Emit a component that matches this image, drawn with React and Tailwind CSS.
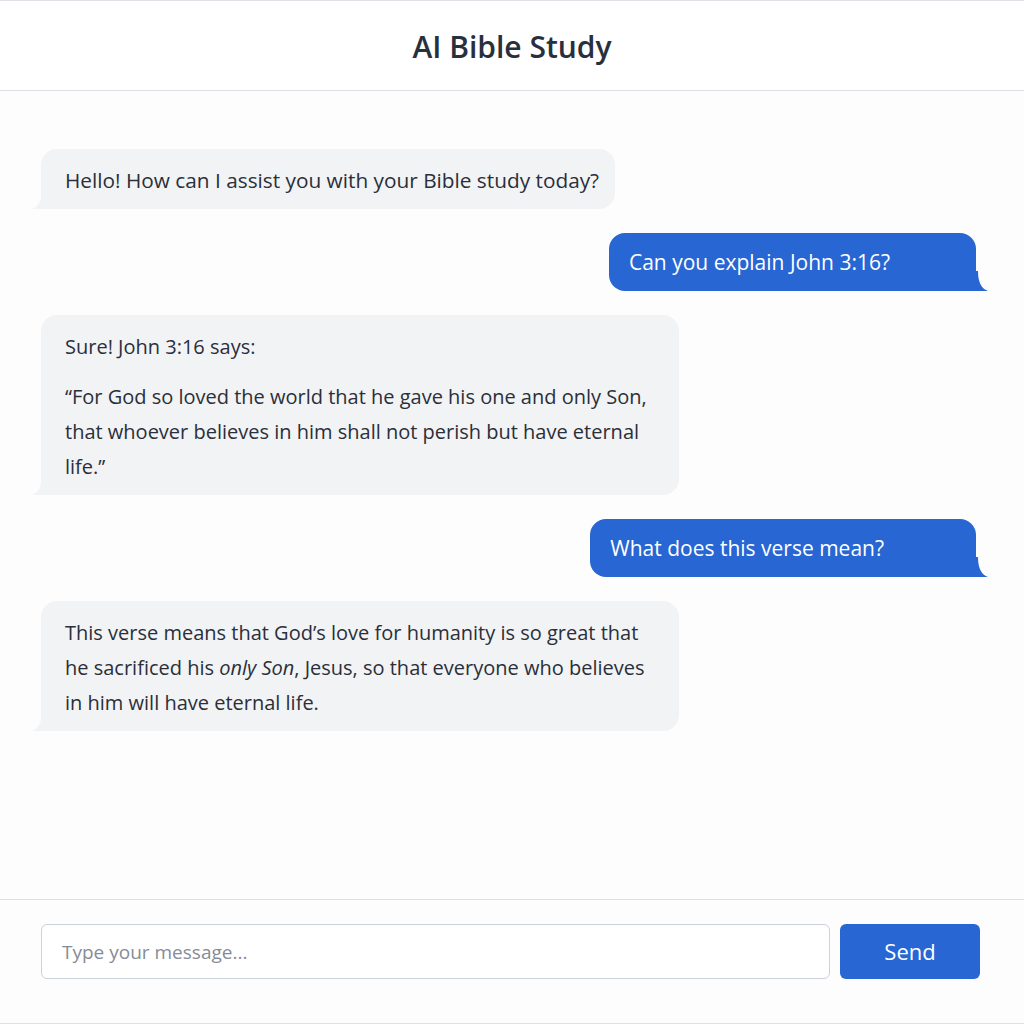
import React from 'react';

const messages = [
  { id: 1, from: 'bot', size: 'text-[20.8px]', paras: ['Hello! How can I assist you with your Bible study today?'] },
  { id: 2, from: 'user', pad: 'pr-[86px]', paras: ['Can you explain John 3:16?'] },
  {
    id: 3,
    from: 'bot',
    paras: [
      'Sure! John 3:16 says:',
      '\u201cFor God so loved the world that he gave his one and only Son, that whoever believes in him shall not perish but have eternal life.\u201d',
    ],
  },
  { id: 4, from: 'user', pad: 'pr-[92px]', paras: ['What does this verse mean?'] },
  {
    id: 5,
    from: 'bot',
    paras: [
      <>
        This verse means that God’s love for humanity is so great that he sacrificed his <em>only Son</em>, Jesus, so that everyone who believes in him will have eternal life.
      </>,
    ],
  },
];

// little curled tail under the bubble corner
const Tail = ({ side, color }) => (
  <svg
    width="16"
    height="20"
    viewBox="0 0 16 20"
    className={side === 'left' ? 'absolute -left-[9px] bottom-0' : 'absolute -right-[12px] bottom-0 -scale-x-100'}
  >
    <path d="M16 0 L16 20 L0 20 C6 18 10 12 10 0 Z" fill={color} />
  </svg>
);

const Bubble = ({ msg }) => {
  const isUser = msg.from === 'user';
  return (
    <div className={`flex ${isUser ? 'justify-end pr-[48px]' : 'justify-start pl-[41px]'}`}>
      <div
        className={`relative max-w-[638px] ${
          isUser
            ? `bg-[#2766d3] text-white rounded-[16px] rounded-br-none pl-5 py-[11px] text-[21px] leading-[36px] ${msg.pad}`
            : `bg-[#f2f3f5] text-[#2a2f3a] rounded-[16px] rounded-bl-none pl-6 pr-4 pt-[14px] pb-[11px] leading-[35px] ${msg.size || 'text-[20px]'}`
        }`}
      >
        {msg.paras.map((p, i) => (
          <p key={i} className={i > 0 ? 'mt-[15px]' : ''}>
            {p}
          </p>
        ))}
        <Tail side={isUser ? 'right' : 'left'} color={isUser ? '#2766d3' : '#f2f3f5'} />
      </div>
    </div>
  );
};

export default function App() {
  return (
    <div
      className="h-[1024px] w-full flex flex-col bg-[#fdfdfe] border-y border-[#dfe1e6]"
      style={{ fontFamily: '"Open Sans", "Noto Sans", sans-serif' }}
    >
      <header className="h-[90px] shrink-0 flex items-center justify-center border-b border-[#dcdee3] bg-white">
        <h1 className="text-[30px] font-semibold text-[#28303d] pt-[2px]">AI Bible Study</h1>
      </header>

      <main className="flex-1 flex flex-col gap-6 pt-[58px]">
        {messages.map((m) => (
          <Bubble key={m.id} msg={m} />
        ))}
      </main>

      <footer className="shrink-0 border-t border-[#dcdee3] pl-[41px] pr-[44px] pt-[24px] pb-[44px] flex gap-[10px]">
        <input
          type="text"
          placeholder="Type your message..."
          className="flex-1 h-[55px] rounded-[6px] border border-[#cdd1d8] bg-white px-5 text-[19px] text-[#2a2f3a] placeholder:text-[#868c97] outline-none"
        />
        <button className="w-[140px] h-[55px] rounded-[6px] bg-[#2766d3] text-white text-[22px] font-medium">
          Send
        </button>
      </footer>
    </div>
  );
}
